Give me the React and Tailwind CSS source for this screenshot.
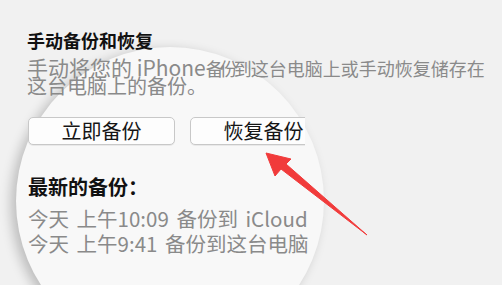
export default function App() {
  return (
    <div className="relative w-[502px] h-[285px] overflow-hidden bg-[#f1f1f1] font-['Noto_Sans_CJK_SC','Noto_Sans',sans-serif]">
      {/* magnifier lens */}
      <div className="absolute left-[16px] top-[47px] w-[308px] h-[308px] rounded-full bg-[#f8f8f8] shadow-[-5px_3px_12px_rgba(0,0,0,0.22)]" />

      <div className="relative flex flex-col pl-[27px] pt-[30px]">
        <div className="text-[18px] leading-[20px] font-bold text-[#111111]">手动备份和恢复</div>

        <div className="mt-[8px] text-[#8a8a8a]">
          <div className="flex items-baseline whitespace-pre h-[18px] leading-[18px]">
            <span className="text-[21px]">手动将您的 iPhone</span>
            <span className="text-[18px] tracking-[-4px]"> 备份到</span>
            <span className="text-[18px] ml-[3px]">这台电脑上或手动恢复储存在</span>
          </div>
          <div className="mt-px text-[20px] leading-[18px] h-[18px]">这台电脑上的备份。</div>
        </div>

        <div className="mt-[22px] flex gap-[15px] pl-px">
          <div className="w-[147px] h-[28px] flex items-center justify-center rounded-[5px] border border-[#c8c8c8] bg-[#fdfdfd] text-[20px] text-[#151515] shadow-[0_1px_0_rgba(0,0,0,0.06)]">
            立即备份
          </div>
          <div className="w-[115px] h-[29px] overflow-hidden">
            <div className="w-[147px] h-[28px] flex items-center justify-center rounded-[5px] border border-[#c8c8c8] bg-[#fdfdfd] text-[20px] text-[#151515] shadow-[0_1px_0_rgba(0,0,0,0.06)]">
              恢复备份
            </div>
          </div>
        </div>

        <div className="mt-[29px] pl-px text-[20px] leading-[24px] font-bold text-[#111111]">最新的备份：</div>
        <div className="mt-[7px] pl-px text-[20.5px] leading-[24.5px] text-[#8a8a8a] whitespace-pre [word-spacing:3px]">
          <div>今天 上午10:09 备份到 iCloud</div>
          <div>今天 上午9:41 备份到这台电脑</div>
        </div>
      </div>

      {/* red annotation arrow */}
      <svg className="absolute inset-0 pointer-events-none" width="502" height="285" viewBox="0 0 502 285">
        <polygon
          points="266,153 291,159 286,164 367,235 281,169 275,176"
          fill="#f13b3b"
          stroke="#f13b3b"
          strokeWidth="1"
          strokeLinejoin="round"
        />
      </svg>
    </div>
  );
}
